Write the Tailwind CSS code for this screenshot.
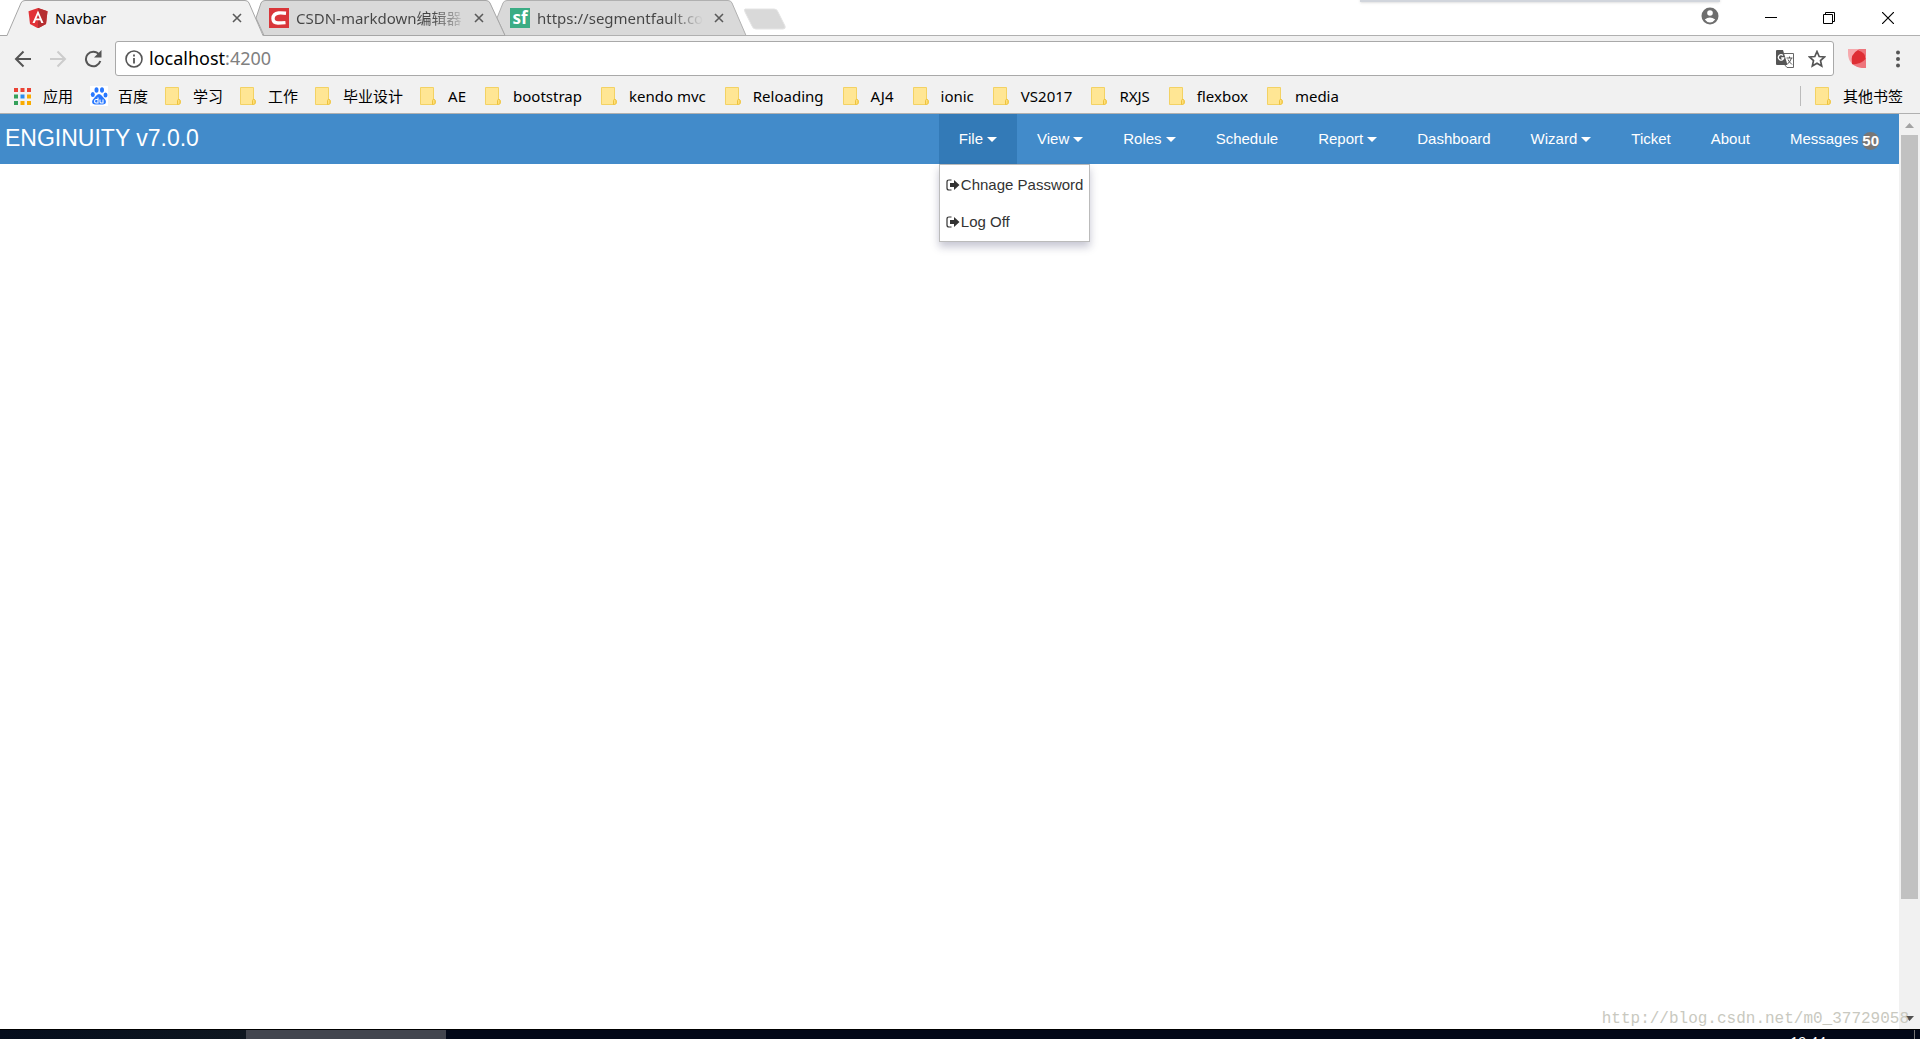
<!DOCTYPE html>
<html lang="zh-CN">
<head>
<meta charset="utf-8">
<title>Navbar</title>
<script src="https://cdn.jsdelivr.net/npm/@tailwindcss/browser@4"></script>
</head>
<body class="relative flex h-screen flex-col overflow-hidden bg-white font-['Noto_Sans','Noto_Sans_CJK_SC',sans-serif] text-black">
<svg class="hidden">
  <symbol id="folder" viewBox="0 0 16 18"><path d="M.5 .5h13v12c1.500 0 2 1 2 2.500s-.5 2.500-2 2.500H.5z" fill="#ffe694" stroke="#f3d264"/><path d="M12.500 17v-3.500c0-1.500 2.500-1.500 2.500 0v2c0 1.500-1.500 2-2.500 2z" fill="#ffe07a" stroke="#eec23f"/></symbol>
  <symbol id="close" viewBox="0 0 10 10"><path d="M1 1l8 8M9 1l-8 8" stroke="#5a5a5a" stroke-width="1.600" fill="none"/></symbol>
  <symbol id="signout" viewBox="0 0 14 12"><path d="M5.500 1H3Q1 1 1 3v6q0 2 2 2h2.500" fill="none" stroke="#333" stroke-width="1.200"/><path d="M4 4h4V1l5.500 5L8 11V8H4z" fill="#333"/></symbol>
</svg>

<div class="relative flex h-9 shrink-0 bg-white">
  <svg class="absolute inset-0 h-9 w-full" fill="none">
    <path d="M0 35.500H1920" stroke="#b0b0b0"/>
    <path d="M505 35.500L497 18 503 3q1-2.500 4-2.500h221q3 0 4 2.500l14 32.500z" fill="#d9d9d9" stroke="#b0b0b0"/>
    <path d="M264 35.500L256 18 261 3q1-2.500 4-2.500h221q3 0 4 2.500l15 32.500z" fill="#d9d9d9" stroke="#a6a6a6"/>
    <path d="M7 36L21 3q1-2.500 4-2.500h220q3 0 4 2.500l14 33z" fill="#f1f1f1"/>
    <path d="M0 35.500H7L21 3q1-2.500 4-2.500h220q3 0 4 2.500l14 32.500" stroke="#a6a6a6"/>
    <path d="M745 9h29q3 0 4 3l7 14q1 3-2 3h-27q-3 0-4-3l-7-14q-1-3 0-3z" fill="#d9d9d9" stroke="#e4e4e4"/>
  </svg>
  <div class="relative flex w-[242px] items-center gap-[7px] pl-7">
    <svg class="size-5 shrink-0" viewBox="0 0 20 20"><path d="M10 0l9.500 3.300L18 16l-8 4.300L2 16 .5 3.300z" fill="#e23237"/><path d="M10 0l9.500 3.300L18 16l-8 4.300z" fill="#b52e31"/><path d="M10 2.500L4.500 15h2.200l1.100-2.800h4.400l1.100 2.800h2.200zm0 4.200l1.600 3.800H8.400z" fill="#fff"/></svg>
    <span class="w-[176px] text-[15px]">Navbar</span>
    <button class="shrink-0" aria-label="关闭"><svg class="size-[10px]"><use href="#close"/></svg></button>
  </div>
  <div class="relative flex w-[242px] items-center gap-[7px] pl-[27px]">
    <svg class="size-5 shrink-0" viewBox="0 0 20 20"><path d="M0 0h20v20H0z" fill="#d9363a"/><path d="M17 5.200q-5-.5-7.500-.2Q4.200 5.600 4 10.500q0 4.500 5 4.500 3.500 0 7.500-.4" fill="none" stroke="#fff" stroke-width="3.400"/></svg>
    <span class="w-[174px] overflow-hidden whitespace-nowrap bg-linear-to-r from-[#444] from-80% to-transparent bg-clip-text text-[15px] text-transparent">CSDN-markdown编辑器</span>
    <button class="shrink-0" aria-label="关闭"><svg class="size-[10px]"><use href="#close"/></svg></button>
  </div>
  <div class="relative flex w-[256px] items-center gap-[7px] pl-[26px]">
    <span class="flex size-5 shrink-0 items-center justify-center bg-[#3bac84] text-[17px] leading-5 font-bold text-white">sf</span>
    <span class="w-[166px] overflow-hidden whitespace-nowrap bg-linear-to-r from-[#444] from-80% to-transparent bg-clip-text text-[15px] text-transparent">https://segmentfault.com</span>
    <button class="ml-1 shrink-0" aria-label="关闭"><svg class="size-[10px]"><use href="#close"/></svg></button>
  </div>
  <div class="relative ml-auto flex items-center pr-[26px]">
    <div class="absolute -top-2 right-[200px] h-[10px] w-[360px] bg-gray-300 shadow"></div>
    <button aria-label="用户" class="relative mr-[46px] mb-1"><svg class="size-[18px]" viewBox="0 0 18 18"><circle cx="9" cy="9" r="8.500" fill="#6e6e6e"/><circle cx="9" cy="6" r="2.800" fill="#fff"/><path d="M3.800 12.500q5-4 10.400 0Q12 15.500 9 15.500t-5.200-3z" fill="#fff"/></svg></button>
    <button aria-label="最小化" class="mr-[46px]"><svg class="h-3 w-3" viewBox="0 0 12 12"><path d="M0 5.500h12" stroke="#000"/></svg></button>
    <button aria-label="还原" class="mr-[47px]"><svg class="h-3 w-3" viewBox="0 0 12 12" fill="none" stroke="#000"><path d="M.5 2.500h9v9h-9zM2.500 2.500V.5h9v9h-2"/></svg></button>
    <button aria-label="关闭"><svg class="h-3 w-3" viewBox="0 0 12 12"><path d="M0 0l12 12M12 0L0 12" stroke="#000" stroke-width="1.200"/></svg></button>
  </div>
</div>

<div class="flex h-[46px] shrink-0 items-center bg-[#f1f1f1] pr-5 pb-px pl-[14px]">
  <button aria-label="后退"><svg class="h-[18px] w-[18px]" viewBox="0 0 18 18" fill="none" stroke="#555" stroke-width="2"><path d="M17 9H2M9.500 1.500L2 9l7.500 7.500"/></svg></button>
  <button aria-label="前进" class="ml-[17px]"><svg class="h-[18px] w-[18px]" viewBox="0 0 18 18" fill="none" stroke="#ccc" stroke-width="2"><path d="M1 9h15M8.500 1.500L16 9l-7.500 7.500"/></svg></button>
  <button aria-label="刷新" class="ml-[17px]"><svg class="h-[18px] w-[18px]" viewBox="0 0 18 18"><path d="M15 4.500A7.300 7.300 0 1 0 16.300 11" fill="none" stroke="#555" stroke-width="2"/><path d="M17.500 0v7.500H10z" fill="#555"/></svg></button>
  <div class="ml-[13px] flex h-[35px] grow items-center rounded-[3px] border border-[#a9a9a9] bg-white pr-[7px] pl-[9px]">
    <svg class="size-[18px] shrink-0" viewBox="0 0 18 18"><circle cx="9" cy="9" r="8" fill="none" stroke="#555" stroke-width="1.600"/><path d="M9 8v5.500M9 4.500v2" stroke="#555" stroke-width="1.800"/></svg>
    <div class="ml-1.5 grow text-[18px]">localhost<span class="text-[#808080]">:4200</span></div>
    <button aria-label="翻译"><svg class="h-[18px] w-[18px]" viewBox="0 0 18 18"><path d="M8 3.500h9.500v14H11L8 14" fill="#fff" stroke="#666"/><path d="M0 1q0-1 1-1h6l4.500 15H1q-1 0-1-1z" fill="#555"/><path d="M7 5.500A2.700 2.700 0 1 0 7.700 8H5.200" fill="none" stroke="#fff" stroke-width="1.300"/><path d="M10.500 8h6M13.500 6.500V8M15.500 8q-1 3.500-4 6M12 9.500q1 2.500 4 5" fill="none" stroke="#555"/></svg></button>
    <button aria-label="收藏" class="ml-[14px]"><svg class="h-[18px] w-[18px]" viewBox="0 0 18 18"><path d="M9 1.500l2.200 5 5.300.5-4 3.600 1.200 5.400L9 13.200l-4.700 2.800 1.200-5.400-4-3.600 5.300-.5z" fill="none" stroke="#555" stroke-width="1.700"/></svg></button>
  </div>
  <button aria-label="扩展" class="ml-[13px]"><svg class="h-5 w-5" viewBox="0 0 20 20"><path d="M1 0h18v19h-4Q1 17 1 4z" fill="#f6a9ad"/><path d="M11 0h8v8zM5 15q9 1 14-7v11h-4Q9 18 5 15z" fill="#ee757c"/><path d="M5 15Q3 5 11 1q8 3 7.500 9-5 6-13.500 5z" fill="#de2e34"/></svg></button>
  <button aria-label="菜单" class="ml-[29px]"><svg class="h-[18px] w-1" viewBox="0 0 4 18" fill="#555"><circle cx="2" cy="2.500" r="2"/><circle cx="2" cy="9" r="2"/><circle cx="2" cy="15.500" r="2"/></svg></button>
</div>

<nav aria-label="书签" class="flex h-8 shrink-0 items-center gap-[19px] border-b border-[#b0b0b0] bg-[#f1f1f1] pr-[17px] pb-[3px] pl-[14px] text-[15px] whitespace-nowrap">
  <a href="#" class="-mr-0.5 flex items-center gap-3"><svg class="size-[17px]" viewBox="0 0 17 17"><path d="M0 0h4v4H0zM6.500 0h4v4h-4zM13 0h4v4h-4z" fill="#ea4335"/><path d="M0 6.500h4v4H0zM0 13h4v4H0z" fill="#34a05a"/><path d="M6.500 6.500h4v4h-4z" fill="#2a8cf0"/><path d="M13 6.500h4v4h-4zM6.500 13h4v4h-4zM13 13h4v4h-4z" fill="#f9ab00"/></svg>应用</a>
  <a href="#" class="-mr-0.5 flex items-center gap-2.5"><svg class="h-5 w-[18px]" viewBox="0 0 18 20"><path d="M0 0h18v20H0z" fill="#fff"/><g fill="#2878ff"><ellipse cx="6.500" cy="4" rx="2" ry="2.800"/><ellipse cx="12" cy="4" rx="2" ry="2.800"/><ellipse cx="2.800" cy="8.500" rx="2" ry="2.600"/><ellipse cx="15.500" cy="9" rx="2" ry="2.600"/><path d="M9 8q2 0 3.500 2.500l3 3.500q1.500 4-2.500 4.500H5Q1 18 2.500 14l3-3.500Q7 8 9 8z"/></g><path d="M8 11.500V17H6q-1.500 0-1.500-1.700T6 13.500h2M10 13.500V16q0 1 1.500 1H13v-3.500" fill="none" stroke="#fff" stroke-width="1.100"/></svg>百度</a>
  <a href="#" class="-mr-0.5 flex items-center gap-3"><svg class="h-[18px] w-4"><use href="#folder"/></svg>学习</a>
  <a href="#" class="-mr-0.5 flex items-center gap-3"><svg class="h-[18px] w-4"><use href="#folder"/></svg>工作</a>
  <a href="#" class="-mr-0.5 flex items-center gap-3"><svg class="h-[18px] w-4"><use href="#folder"/></svg>毕业设计</a>
  <a href="#" class="flex items-center gap-3"><svg class="h-[18px] w-4"><use href="#folder"/></svg>AE</a>
  <a href="#" class="flex items-center gap-3"><svg class="h-[18px] w-4"><use href="#folder"/></svg>bootstrap</a>
  <a href="#" class="flex items-center gap-3"><svg class="h-[18px] w-4"><use href="#folder"/></svg>kendo mvc</a>
  <a href="#" class="flex items-center gap-3"><svg class="h-[18px] w-4"><use href="#folder"/></svg>Reloading</a>
  <a href="#" class="flex items-center gap-3"><svg class="h-[18px] w-4"><use href="#folder"/></svg>AJ4</a>
  <a href="#" class="flex items-center gap-3"><svg class="h-[18px] w-4"><use href="#folder"/></svg>ionic</a>
  <a href="#" class="flex items-center gap-3"><svg class="h-[18px] w-4"><use href="#folder"/></svg>VS2017</a>
  <a href="#" class="flex items-center gap-3"><svg class="h-[18px] w-4"><use href="#folder"/></svg>RXJS</a>
  <a href="#" class="flex items-center gap-3"><svg class="h-[18px] w-4"><use href="#folder"/></svg>flexbox</a>
  <a href="#" class="flex items-center gap-3"><svg class="h-[18px] w-4"><use href="#folder"/></svg>media</a>
  <a href="#" class="ml-auto flex items-center gap-3"><span class="mr-[2px] h-5 w-px bg-[#bbb]"></span><svg class="h-[18px] w-4"><use href="#folder"/></svg>其他书签</a>
</nav>

<div class="flex min-h-0 grow">
  <main class="min-w-0 grow font-['Liberation_Sans',Arial,sans-serif] text-[15px]">
    <header class="flex h-[50px] items-center bg-[#428bca] text-white">
      <a href="#" class="grow pb-0.5 pl-[5px] text-[23px] leading-8">ENGINUITY v7.0.0</a>
      <ul class="flex h-full leading-[50px]">
        <li class="relative">
          <a href="#" class="flex items-center gap-1 bg-[#337ab7] px-5">File <span class="border-x-5 border-t-5 border-x-transparent"></span></a>
          <ul class="absolute top-full left-0 border border-[#bbb] bg-white py-px text-[#333] shadow-[0_5px_8px_rgba(30,30,80,0.25)]">
            <li><a href="#" class="flex h-[37px] items-center gap-px px-1.5 whitespace-nowrap"><svg class="h-3 w-[14px]"><use href="#signout"/></svg>Chnage Password</a></li>
            <li><a href="#" class="flex h-[37px] items-center gap-px px-1.5 whitespace-nowrap"><svg class="h-3 w-[14px]"><use href="#signout"/></svg>Log Off</a></li>
          </ul>
        </li>
        <li><a href="#" class="flex items-center gap-1 px-5">View <span class="border-x-5 border-t-5 border-x-transparent"></span></a></li>
        <li><a href="#" class="flex items-center gap-1 px-5">Roles <span class="border-x-5 border-t-5 border-x-transparent"></span></a></li>
        <li><a href="#" class="block px-5">Schedule</a></li>
        <li><a href="#" class="flex items-center gap-1 px-5">Report <span class="border-x-5 border-t-5 border-x-transparent"></span></a></li>
        <li><a href="#" class="block px-5">Dashboard</a></li>
        <li><a href="#" class="flex items-center gap-1 px-5">Wizard <span class="border-x-5 border-t-5 border-x-transparent"></span></a></li>
        <li><a href="#" class="block px-5">Ticket</a></li>
        <li><a href="#" class="block px-5">About</a></li>
        <li><a href="#" class="flex items-center gap-1 px-5">Messages <span class="mt-1 rounded-full bg-[#777] text-[15px] leading-[18px] font-bold">50</span></a></li>
      </ul>
    </header>
  </main>
  <div class="flex w-[21px] shrink-0 flex-col items-center bg-[#f1f1f1] py-2">
    <svg class="mt-px h-[5px] w-[9px] shrink-0" viewBox="0 0 9 5"><path d="M4.500 0L9 5H0z" fill="#a3a3a3"/></svg>
    <div class="mt-[7px] h-[85%] w-[17px] bg-[#c1c1c1]"></div>
    <svg class="mt-auto h-[5px] w-[9px] shrink-0" viewBox="0 0 9 5"><path d="M0 0h9L4.500 5z" fill="#505050"/></svg>
  </div>
</div>

<footer class="relative flex h-[10px] shrink-0 overflow-hidden border-t border-black bg-[#020818] text-sm text-white">
  <div class="w-[246px] bg-linear-to-r from-[#050d1c] to-[#0f1720]"></div>
  <div class="w-[200px] bg-[#42454e]"></div>
  <span class="ml-auto pt-0.5 pr-[88px] leading-5">19:44</span>
  <div class="mr-[5px] w-px bg-[#777]"></div>
</footer>
<div class="absolute right-[11px] bottom-2 font-['Liberation_Mono',monospace] text-[16px] text-[#c9c9c0]">http://blog.csdn.net/m0_37729058</div>
</body>
</html>
